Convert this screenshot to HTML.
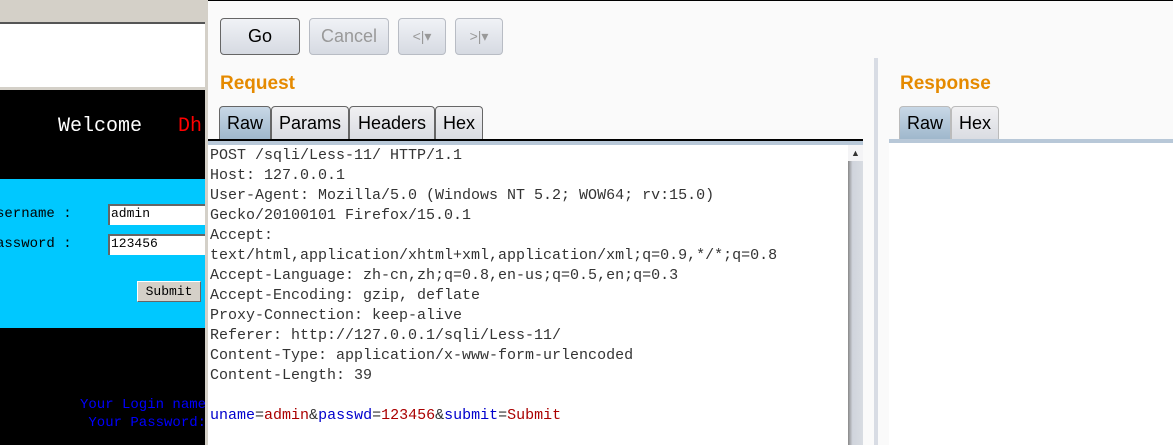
<!DOCTYPE html>
<html><head><style>
*{margin:0;padding:0;box-sizing:border-box}
body{width:1173px;height:445px;overflow:hidden;position:relative;background:#fafafa;font-family:"Liberation Sans",sans-serif}
.a{position:absolute}
.mono{font-family:"Liberation Mono","Noto Sans CJK SC",monospace;font-size:15px;line-height:20px;color:#333;white-space:pre}
.btn{position:absolute;top:18px;height:37px;border:1px solid #b8bcc4;border-radius:4px;background:linear-gradient(#f0f2f6,#d6dae2);font-size:18px;color:#999;text-align:center;line-height:35px}
.tab{position:absolute;height:33px;border:1px solid #666;border-bottom:none;border-radius:4px 4px 0 0;background:linear-gradient(#f0f0f2,#dadce2);font-size:18px;line-height:33px;text-align:center;color:#000}
.sel{background:linear-gradient(#c8d8e6,#9fb8cc)}
</style></head><body>
<div class="a" style="left:0;top:0;width:205px;height:22px;background:#d4d0c8"></div>
<div class="a" style="left:0;top:22px;width:205px;height:2px;background:#555"></div>
<div class="a" style="left:0;top:24px;width:205px;height:63px;background:#fff"></div>
<div class="a" style="left:0;top:87px;width:205px;height:3px;background:#d4d0c8"></div>
<div class="a" style="left:0;top:90px;width:205px;height:355px;background:#000"></div>
<div class="a" style="left:0;top:179px;width:205px;height:149px;background:#00c8ff"></div>
<div class="a mono" style="left:58px;top:115px;font-size:20px;line-height:24px;color:#fff">Welcome   <span style="color:#f00">Dh</span></div>
<div class="a mono" style="left:-4px;top:204px;font-size:14px;color:#000">sername :</div>
<div class="a mono" style="left:-4px;top:234px;font-size:14px;color:#000">assword :</div>
<div class="a" style="left:108px;top:204px;width:100px;height:21px;background:#fff;border-top:2px solid #666;border-left:2px solid #666"></div>
<div class="a mono" style="left:111px;top:204px;font-size:13px;color:#000">admin</div>
<div class="a" style="left:108px;top:234px;width:100px;height:21px;background:#fff;border-top:2px solid #666;border-left:2px solid #666"></div>
<div class="a mono" style="left:111px;top:234px;font-size:13px;color:#000">123456</div>
<div class="a" style="left:137px;top:281px;width:64px;height:21px;background:#d4d0c8;border:1px solid #fff;border-right-color:#666;border-bottom-color:#666;font-family:'Liberation Mono',monospace;font-size:13px;text-align:center;line-height:19px">Submit</div>
<div class="a mono" style="left:80px;top:396px;font-size:14px;line-height:18px;color:#0000ff">Your Login name:
 Your Password:I</div>
<div class="a" style="left:205px;top:0;width:3px;height:445px;background:#d4d0c8"></div>
<div class="a" style="left:208px;top:0;width:965px;height:1px;background:#000"></div>
<div class="btn" style="left:220px;width:80px;color:#000;border-color:#666">Go</div>
<div class="btn" style="left:309px;width:80px">Cancel</div>
<div class="btn" style="left:398px;width:48px;font-size:14px">&lt;|▾</div>
<div class="btn" style="left:455px;width:48px;font-size:14px">&gt;|▾</div>
<div class="a" style="left:220px;top:73px;font-size:19px;font-weight:bold;color:#e58a00">Request</div>
<div class="a" style="left:900px;top:73px;font-size:19px;font-weight:bold;color:#e58a00">Response</div>
<div class="tab sel" style="left:219px;top:106px;width:52px">Raw</div>
<div class="tab" style="left:271px;top:106px;width:78px">Params</div>
<div class="tab" style="left:349px;top:106px;width:86px">Headers</div>
<div class="tab" style="left:435px;top:106px;width:48px">Hex</div>
<div class="a" style="left:208px;top:139px;width:655px;height:2px;background:#000"></div>
<div class="a" style="left:208px;top:141px;width:655px;height:4px;background:#b8c8d8"></div>
<div class="a" style="left:208px;top:145px;width:640px;height:300px;background:#fff"></div>
<div class="a" style="left:848px;top:145px;width:15px;height:300px;background:linear-gradient(90deg,#888,#d0d4dc 30%,#d8dce2)"></div>
<div class="a" style="left:848px;top:145px;width:15px;height:16px;background:#f4f4f6;font-size:9px;text-align:center;line-height:16px;color:#333">▲</div>
<div class="a" style="left:874px;top:58px;width:4px;height:387px;background:#d8dce4"></div>
<div class="tab sel" style="left:899px;top:106px;width:52px;border-color:#bbb">Raw</div>
<div class="tab" style="left:951px;top:106px;width:48px;border-color:#bbb">Hex</div>
<div class="a" style="left:889px;top:139px;width:284px;height:4px;background:#b8c8d8"></div>
<div class="a" style="left:889px;top:143px;width:284px;height:302px;background:#fff"></div>
<div class="a mono" style="left:210px;top:146px">POST /sqli/Less-11/ HTTP/1.1
Host: 127.0.0.1
User-Agent: Mozilla/5.0 (Windows NT 5.2; WOW64; rv:15.0)
Gecko/20100101 Firefox/15.0.1
Accept:
text/html,application/xhtml+xml,application/xml;q=0.9,*/*;q=0.8
Accept-Language: zh-cn,zh;q=0.8,en-us;q=0.5,en;q=0.3
Accept-Encoding: gzip, deflate
Proxy-Connection: keep-alive
Referer: http://127.0.0.1/sqli/Less-11/
Content-Type: application/x-www-form-urlencoded
Content-Length: 39

<span style="color:#00c">uname</span>=<span style="color:#a00">admin</span>&amp;<span style="color:#00c">passwd</span>=<span style="color:#a00">123456</span>&amp;<span style="color:#00c">submit</span>=<span style="color:#a00">Submit</span></div>
</body></html>
